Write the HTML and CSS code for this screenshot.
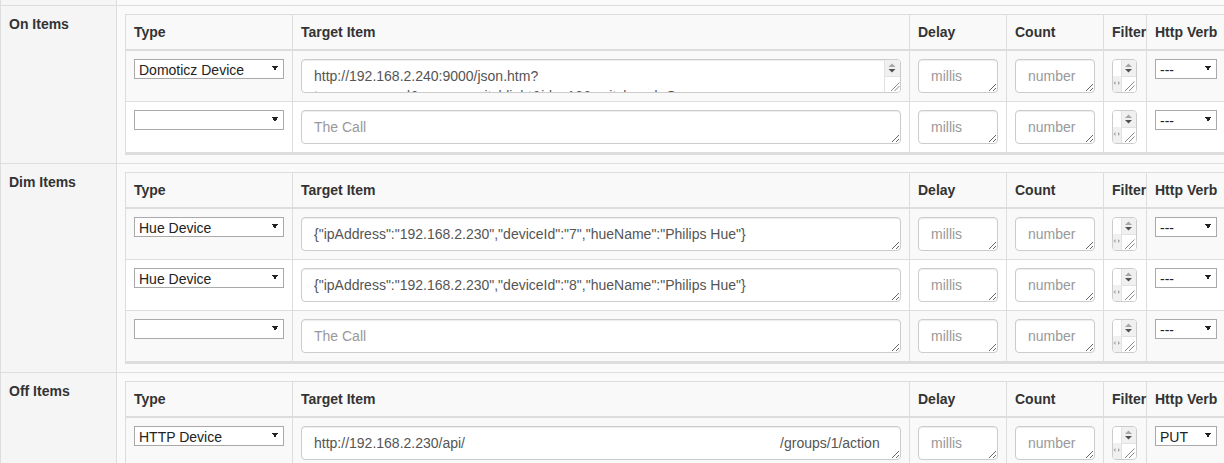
FILE: index.html
```html
<!DOCTYPE html>
<html lang="en">
<head>
    <meta charset="UTF-8">
    <title>Edit Device</title>
    <link rel="stylesheet" href="styles.css">
</head>
<body>
    <table class="items">
        <tr class="tail"><th></th><td></td></tr>

        <!-- on items -->
        <tr>
            <th>On Items</th>
            <td>
                <table class="calls">
                    <thead>
                        <tr>
                            <th class="c-type">Type</th>
                            <th>Target Item</th>
                            <th class="c-num">Delay</th>
                            <th class="c-num">Count</th>
                            <th class="c-filter">Filter</th>
                            <th class="c-verb">Http Verb</th>
                        </tr>
                    </thead>
                    <tbody>
                        <tr>
                            <td><select class="type"><option>Domoticz Device</option></select></td>
                            <td>
                                <div class="field">
                                    <textarea class="form-control">http://192.168.2.240:9000/json.htm?type=command&amp;param=switchlight&amp;idx=16&amp;switchcmd=On</textarea>
                                    <span class="vscroll"><svg width="16" height="32" viewBox="0 0 16 32"><rect width="16" height="16" fill="#f0f0f0"/><path d="M0.5 0v32M0 16.5h16" stroke="#e2e2e2"/><path d="M4.5 7 8 3.5 11.5 7z" fill="#a6a6a6"/><path d="M4.5 9h7L8 12.5z" fill="#505050"/><path d="M7 31 15.5 22.5M10.5 31 15.5 26" stroke="#8a8a8a"/></svg></span>
                                </div>
                            </td>
                            <td><textarea class="form-control" placeholder="millis"></textarea></td>
                            <td><textarea class="form-control" placeholder="number"></textarea></td>
                            <td>
                                <div class="field filter">
                                    <textarea class="form-control"></textarea>
                                    <span class="scrolls"><svg width="23" height="32" viewBox="0 0 23 32"><rect y="16" width="8" height="16" fill="#f0f0f0"/><rect x="8" width="15" height="16" fill="#f0f0f0"/><path d="M8.5 0v32M8 16.5h15" stroke="#e2e2e2"/><path d="M12 7 15.5 3.5 19 7z" fill="#a6a6a6"/><path d="M12 9h7L15.5 12.5z" fill="#505050"/><path d="M0.5 23 2.5 21v4zM7 23 5 21v4z" fill="#a6a6a6"/><path d="M12 31 21.5 21.5M16 31 21.5 25.5" stroke="#8a8a8a"/></svg></span>
                                </div>
                            </td>
                            <td><select class="verb"><option>---</option></select></td>
                        </tr>
                        <tr>
                            <td><select class="type"><option></option></select></td>
                            <td><textarea class="form-control" placeholder="The Call"></textarea></td>
                            <td><textarea class="form-control" placeholder="millis"></textarea></td>
                            <td><textarea class="form-control" placeholder="number"></textarea></td>
                            <td>
                                <div class="field filter">
                                    <textarea class="form-control"></textarea>
                                    <span class="scrolls"><svg width="23" height="32" viewBox="0 0 23 32"><rect y="16" width="8" height="16" fill="#f0f0f0"/><rect x="8" width="15" height="16" fill="#f0f0f0"/><path d="M8.5 0v32M8 16.5h15" stroke="#e2e2e2"/><path d="M12 7 15.5 3.5 19 7z" fill="#a6a6a6"/><path d="M12 9h7L15.5 12.5z" fill="#505050"/><path d="M0.5 23 2.5 21v4zM7 23 5 21v4z" fill="#a6a6a6"/><path d="M12 31 21.5 21.5M16 31 21.5 25.5" stroke="#8a8a8a"/></svg></span>
                                </div>
                            </td>
                            <td><select class="verb"><option>---</option></select></td>
                        </tr>
                    </tbody>
                </table>
            </td>
        </tr>

        <!-- dim items -->
        <tr>
            <th>Dim Items</th>
            <td>
                <table class="calls">
                    <thead>
                        <tr>
                            <th class="c-type">Type</th>
                            <th>Target Item</th>
                            <th class="c-num">Delay</th>
                            <th class="c-num">Count</th>
                            <th class="c-filter">Filter</th>
                            <th class="c-verb">Http Verb</th>
                        </tr>
                    </thead>
                    <tbody>
                        <tr>
                            <td><select class="type"><option>Hue Device</option></select></td>
                            <td><textarea class="form-control">{"ipAddress":"192.168.2.230","deviceId":"7","hueName":"Philips Hue"}</textarea></td>
                            <td><textarea class="form-control" placeholder="millis"></textarea></td>
                            <td><textarea class="form-control" placeholder="number"></textarea></td>
                            <td>
                                <div class="field filter">
                                    <textarea class="form-control"></textarea>
                                    <span class="scrolls"><svg width="23" height="32" viewBox="0 0 23 32"><rect y="16" width="8" height="16" fill="#f0f0f0"/><rect x="8" width="15" height="16" fill="#f0f0f0"/><path d="M8.5 0v32M8 16.5h15" stroke="#e2e2e2"/><path d="M12 7 15.5 3.5 19 7z" fill="#a6a6a6"/><path d="M12 9h7L15.5 12.5z" fill="#505050"/><path d="M0.5 23 2.5 21v4zM7 23 5 21v4z" fill="#a6a6a6"/><path d="M12 31 21.5 21.5M16 31 21.5 25.5" stroke="#8a8a8a"/></svg></span>
                                </div>
                            </td>
                            <td><select class="verb"><option>---</option></select></td>
                        </tr>
                        <tr>
                            <td><select class="type"><option>Hue Device</option></select></td>
                            <td><textarea class="form-control">{"ipAddress":"192.168.2.230","deviceId":"8","hueName":"Philips Hue"}</textarea></td>
                            <td><textarea class="form-control" placeholder="millis"></textarea></td>
                            <td><textarea class="form-control" placeholder="number"></textarea></td>
                            <td>
                                <div class="field filter">
                                    <textarea class="form-control"></textarea>
                                    <span class="scrolls"><svg width="23" height="32" viewBox="0 0 23 32"><rect y="16" width="8" height="16" fill="#f0f0f0"/><rect x="8" width="15" height="16" fill="#f0f0f0"/><path d="M8.5 0v32M8 16.5h15" stroke="#e2e2e2"/><path d="M12 7 15.5 3.5 19 7z" fill="#a6a6a6"/><path d="M12 9h7L15.5 12.5z" fill="#505050"/><path d="M0.5 23 2.5 21v4zM7 23 5 21v4z" fill="#a6a6a6"/><path d="M12 31 21.5 21.5M16 31 21.5 25.5" stroke="#8a8a8a"/></svg></span>
                                </div>
                            </td>
                            <td><select class="verb"><option>---</option></select></td>
                        </tr>
                        <tr>
                            <td><select class="type"><option></option></select></td>
                            <td><textarea class="form-control" placeholder="The Call"></textarea></td>
                            <td><textarea class="form-control" placeholder="millis"></textarea></td>
                            <td><textarea class="form-control" placeholder="number"></textarea></td>
                            <td>
                                <div class="field filter">
                                    <textarea class="form-control"></textarea>
                                    <span class="scrolls"><svg width="23" height="32" viewBox="0 0 23 32"><rect y="16" width="8" height="16" fill="#f0f0f0"/><rect x="8" width="15" height="16" fill="#f0f0f0"/><path d="M8.5 0v32M8 16.5h15" stroke="#e2e2e2"/><path d="M12 7 15.5 3.5 19 7z" fill="#a6a6a6"/><path d="M12 9h7L15.5 12.5z" fill="#505050"/><path d="M0.5 23 2.5 21v4zM7 23 5 21v4z" fill="#a6a6a6"/><path d="M12 31 21.5 21.5M16 31 21.5 25.5" stroke="#8a8a8a"/></svg></span>
                                </div>
                            </td>
                            <td><select class="verb"><option>---</option></select></td>
                        </tr>
                    </tbody>
                </table>
            </td>
        </tr>

        <!-- off items -->
        <tr>
            <th>Off Items</th>
            <td>
                <table class="calls">
                    <thead>
                        <tr>
                            <th class="c-type">Type</th>
                            <th>Target Item</th>
                            <th class="c-num">Delay</th>
                            <th class="c-num">Count</th>
                            <th class="c-filter">Filter</th>
                            <th class="c-verb">Http Verb</th>
                        </tr>
                    </thead>
                    <tbody>
                        <tr>
                            <td><select class="type"><option>HTTP Device</option></select></td>
                            <td><textarea class="form-control">http://192.168.2.230/api/&nbsp;&nbsp;&nbsp;&nbsp;&nbsp;&nbsp;&nbsp;&nbsp;&nbsp;&nbsp;&nbsp;&nbsp;&nbsp;&nbsp;&nbsp;&nbsp;&nbsp;&nbsp;&nbsp;&nbsp;&nbsp;&nbsp;&nbsp;&nbsp;&nbsp;&nbsp;&nbsp;&nbsp;&nbsp;&nbsp;&nbsp;&nbsp;&nbsp;&nbsp;&nbsp;&nbsp;&nbsp;&nbsp;&nbsp;&nbsp;&nbsp;&nbsp;&nbsp;&nbsp;&nbsp;&nbsp;&nbsp;&nbsp;&nbsp;&nbsp;&nbsp;&nbsp;&nbsp;&nbsp;&nbsp;&nbsp;&nbsp;&nbsp;&nbsp;&nbsp;&nbsp;&nbsp;&nbsp;&nbsp;&nbsp;&nbsp;&nbsp;&nbsp;&nbsp;&nbsp;&nbsp;&nbsp;&nbsp;&nbsp;&nbsp;&nbsp;&nbsp;&nbsp;&nbsp;&nbsp;&nbsp;/groups/1/action</textarea></td>
                            <td><textarea class="form-control" placeholder="millis"></textarea></td>
                            <td><textarea class="form-control" placeholder="number"></textarea></td>
                            <td>
                                <div class="field filter">
                                    <textarea class="form-control"></textarea>
                                    <span class="scrolls"><svg width="23" height="32" viewBox="0 0 23 32"><rect y="16" width="8" height="16" fill="#f0f0f0"/><rect x="8" width="15" height="16" fill="#f0f0f0"/><path d="M8.5 0v32M8 16.5h15" stroke="#e2e2e2"/><path d="M12 7 15.5 3.5 19 7z" fill="#a6a6a6"/><path d="M12 9h7L15.5 12.5z" fill="#505050"/><path d="M0.5 23 2.5 21v4zM7 23 5 21v4z" fill="#a6a6a6"/><path d="M12 31 21.5 21.5M16 31 21.5 25.5" stroke="#8a8a8a"/></svg></span>
                                </div>
                            </td>
                            <td><select class="verb"><option>PUT</option></select></td>
                        </tr>
                        <tr>
                            <td><select class="type"><option></option></select></td>
                            <td><textarea class="form-control" placeholder="The Call"></textarea></td>
                            <td><textarea class="form-control" placeholder="millis"></textarea></td>
                            <td><textarea class="form-control" placeholder="number"></textarea></td>
                            <td><textarea class="form-control"></textarea></td>
                            <td><select class="verb"><option>---</option></select></td>
                        </tr>
                    </tbody>
                </table>
            </td>
        </tr>
    </table>
</body>
</html>
```

FILE: styles.css
```css
* {
    box-sizing: border-box;
}
html, body {
    overflow: hidden;
}
body {
    margin: 0;
    font-family: "Liberation Sans", Arial, sans-serif;
    font-size: 14px;
    line-height: 20px;
    color: #333;
    background-color: #fff;
}

/* outer table: one row per item list */
.items {
    width: 1240px;
    border-collapse: separate;
    border-spacing: 0;
    border-left: 1px solid #ddd;
}
.items > tbody > tr > th,
.items > tbody > tr > td {
    border-right: 1px solid #ddd;
    border-bottom: 1px solid #ddd;
    padding: 8px;
    vertical-align: top;
    text-align: left;
}
.items > tbody > tr > th {
    width: 116px;
    background-color: #f5f5f5;
    font-weight: bold;
}
.items > tbody > tr > td {
    background-color: #fafafa;
}
.items > tbody > tr.tail > th,
.items > tbody > tr.tail > td {
    height: 6px;
    padding: 0;
}

/* inner table with the calls */
.calls {
    width: 100%;
    table-layout: fixed;
    border-collapse: separate;
    border-spacing: 0;
    border-top: 1px solid #ddd;
    border-left: 1px solid #ddd;
    border-bottom: 2px solid #ddd;
    background-color: #fff;
}
.calls th, .calls td {
    border-right: 1px solid #ddd;
    border-bottom: 1px solid #ddd;
    padding: 8px;
    vertical-align: top;
    text-align: left;
}
.calls thead th {
    padding: 7px 8px;
    background-color: #f9f9f9;
    border-bottom-width: 2px;
    white-space: nowrap;
}
.calls tbody tr:nth-child(odd) td {
    background-color: #f9f9f9;
}
.c-type {
    width: 167px;
}
.c-num {
    width: 97px;
}
.c-filter {
    width: 43px;
}
.c-verb {
    width: 84px;
}

/* form controls */
.form-control {
    display: block;
    width: 100%;
    height: 34px;
    padding: 6px 12px;
    font: inherit;
    color: #555;
    background-color: #fff;
    border: 1px solid #ccc;
    border-radius: 4px;
    box-shadow: inset 0 1px 1px rgba(0, 0, 0, 0.075);
    overflow: hidden;
}
.form-control::placeholder {
    color: #999;
}
.field {
    position: relative;
}
.field.filter {
    width: 25px;
}
.field.filter .form-control {
    padding: 6px 2px;
}
.vscroll, .scrolls {
    position: absolute;
    top: 1px;
    right: 1px;
    bottom: 1px;
    background-color: #fff;
    border-radius: 0 3px 3px 0;
    overflow: hidden;
    pointer-events: none;
}
.vscroll svg, .scrolls svg {
    display: block;
}
.scrolls {
    left: 1px;
    border-radius: 3px;
}

select {
    display: block;
    height: 20px;
    padding: 0 4px;
    font: inherit;
    color: #222;
    border: 1px solid #a9a9a9;
    border-radius: 0;
    -webkit-appearance: none;
    appearance: none;
    background-color: #fff;
    background-image: linear-gradient(to bottom left, #222 50%, transparent 50%),
                      linear-gradient(to bottom right, #222 50%, transparent 50%);
    background-size: 3px 5px;
    background-position: right 8px top 6px, right 5px top 6px;
    background-repeat: no-repeat;
}
select.type {
    width: 150px;
}
select.verb {
    width: 62px;
}
```
